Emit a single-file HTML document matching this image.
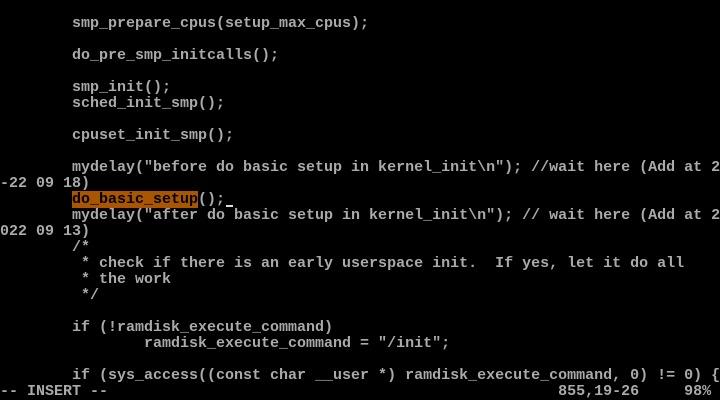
<!DOCTYPE html>
<html><head><meta charset="utf-8"><style>
html,body{margin:0;padding:0;background:#000;}
body{width:720px;height:400px;overflow:hidden;}
pre{margin:0;font-family:"Liberation Mono","DejaVu Sans Mono",monospace;font-size:15px;line-height:16px;color:#aaa;font-weight:bold;white-space:pre;overflow:hidden;width:720px;height:400px;letter-spacing:0;}
.h{background:#aa5500;color:#000;}
.c{display:inline-block;width:9px;height:16px;position:relative;vertical-align:top;}
.c:after{content:"";position:absolute;left:1px;right:1px;top:13px;height:2px;background:#ddd;}
</style></head><body><pre>

        smp_prepare_cpus(setup_max_cpus);

        do_pre_smp_initcalls();

        smp_init();
        sched_init_smp();

        cpuset_init_smp();

        mydelay("before do basic setup in kernel_init\n"); //wait here (Add at 2
-22 09 18)
        <span class="h">do_basic_setup</span>();<span class="c"></span>
        mydelay("after do basic setup in kernel_init\n"); // wait here (Add at 2
022 09 13)
        /*
         * check if there is an early userspace init.  If yes, let it do all
         * the work
         */

        if (!ramdisk_execute_command)
                ramdisk_execute_command = "/init";

        if (sys_access((const char __user *) ramdisk_execute_command, 0) != 0) {
-- INSERT --                                                  855,19-26     98%</pre></body></html>
